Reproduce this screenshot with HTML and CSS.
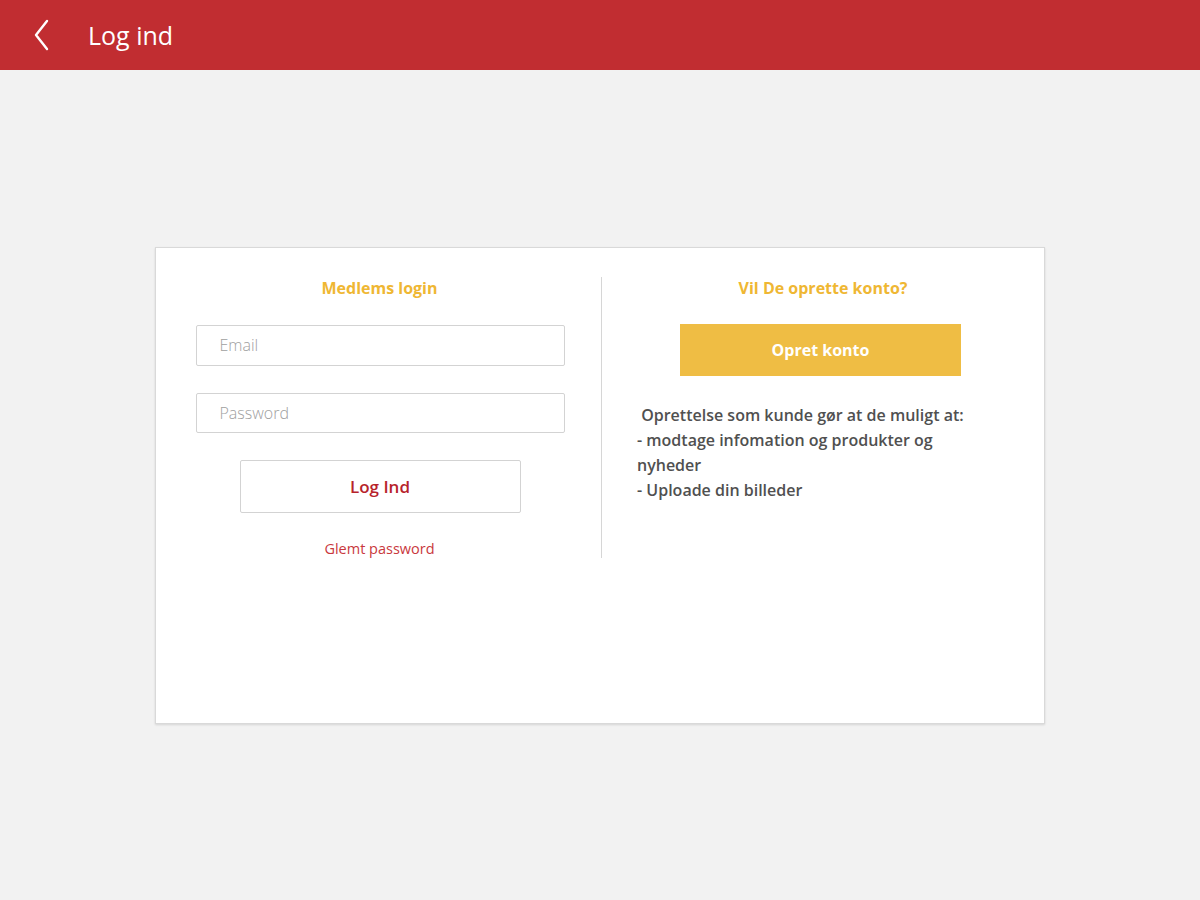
FILE: index.html
```html
<!DOCTYPE html>
<html lang="da">
<head>
  <meta charset="UTF-8" />
  <meta name="viewport" content="width=device-width, initial-scale=1.0"/>
  <title>Log ind</title>
  <link rel="stylesheet" href="styles.css">
</head>
<body>

  <div class="topbar">
    <button class="back-btn" aria-label="Tilbage">
      <svg width="20" height="34" viewBox="0 0 20 34">
        <path d="M15 3 L4 17 L15 31" fill="none" stroke="#fff" stroke-width="2.4" stroke-linecap="round" stroke-linejoin="round"/>
      </svg>
    </button>
    <span class="topbar-title">Log ind</span>
  </div>

  <div class="page">
    <div class="card">
      <div class="col col-login">
        <h2 class="col-title">Medlems login</h2>
        <input class="field" type="email" placeholder="Email">
        <input class="field" type="password" placeholder="Password">
        <button class="login-btn">Log Ind</button>
        <a class="forgot" href="#">Glemt password</a>
      </div>
      <div class="col col-signup">
        <h2 class="col-title">Vil De oprette konto?</h2>
        <button class="signup-btn">Opret konto</button>
        <p class="signup-info">
          &nbsp;Oprettelse som kunde gør at de muligt at:<br>
          - modtage infomation og produkter og nyheder<br>
          - Uploade din billeder
        </p>
      </div>
    </div>
  </div>

</body>
</html>
```

FILE: styles.css
```css
body {
  margin: 0;
  padding: 0;
  font-family: 'Open Sans', Lato, sans-serif;
  background: #f2f2f2;
  height: 100vh;
}

.topbar {
  height: 70px;
  background: #c12d31;
  display: flex;
  align-items: center;
  padding-left: 32px;
  color: white;
}

.back-btn {
  background: none;
  border: none;
  padding: 0;
  width: 24px;
  height: 34px;
  cursor: pointer;
  display: flex;
  align-items: center;
}

.topbar-title {
  margin-left: 32px;
  font-size: 25px;
}

.page {
  padding-top: 177px;
  display: flex;
  justify-content: center;
}

.card {
  width: 890px;
  height: 477px;
  background: #fff;
  border: 1px solid #d9d9d9;
  box-shadow: 0 1px 2px rgba(0, 0, 0, 0.12);
  padding-top: 29px;
  box-sizing: border-box;
  display: grid;
  grid-template-columns: 445px 443px;
  align-items: start;
}

.col {
  display: flex;
  flex-direction: column;
  align-items: center;
  height: 281px;
}

.col-signup {
  border-left: 1px solid #d6d6d6;
  align-items: stretch;
}

.col-title {
  margin: 0;
  font-size: 16px;
  font-weight: bold;
  color: #efb733;
  line-height: 22px;
  text-align: center;
}

.field {
  width: 369px;
  height: 41px;
  box-sizing: border-box;
  border: 1px solid #d3d3d3;
  border-radius: 2px;
  padding: 0 23px;
  font-family: inherit;
  font-size: 16px;
  font-weight: 300;
  color: #444;
  outline: none;
  margin-left: 3px;
}

.field::placeholder {
  color: #a0a0a0;
}

.col-login .col-title {
  margin-left: 2px;
}

.col-login .field:first-of-type {
  margin-top: 26px;
}

.col-login .field + .field {
  margin-top: 27px;
}

.login-btn {
  margin-top: 27px;
  margin-left: 3px;
  width: 281px;
  height: 53px;
  background: #fff;
  border: 1px solid #d3d3d3;
  border-radius: 2px;
  font-family: inherit;
  font-size: 17px;
  font-weight: 600;
  color: #b7232b;
  cursor: pointer;
}

.forgot {
  margin-top: 26px;
  margin-left: 2px;
  font-size: 14.5px;
  color: #c9383d;
  text-decoration: none;
}

.signup-btn {
  margin-top: 25px;
  margin-left: 78px;
  width: 281px;
  height: 52px;
  background: #efbd44;
  border: none;
  font-family: inherit;
  font-size: 16px;
  font-weight: bold;
  color: #fff;
  cursor: pointer;
}

.signup-info {
  margin: 27px 0 0 35px;
  width: 355px;
  font-size: 16px;
  font-weight: 600;
  line-height: 25px;
  color: #505050;
}
```
